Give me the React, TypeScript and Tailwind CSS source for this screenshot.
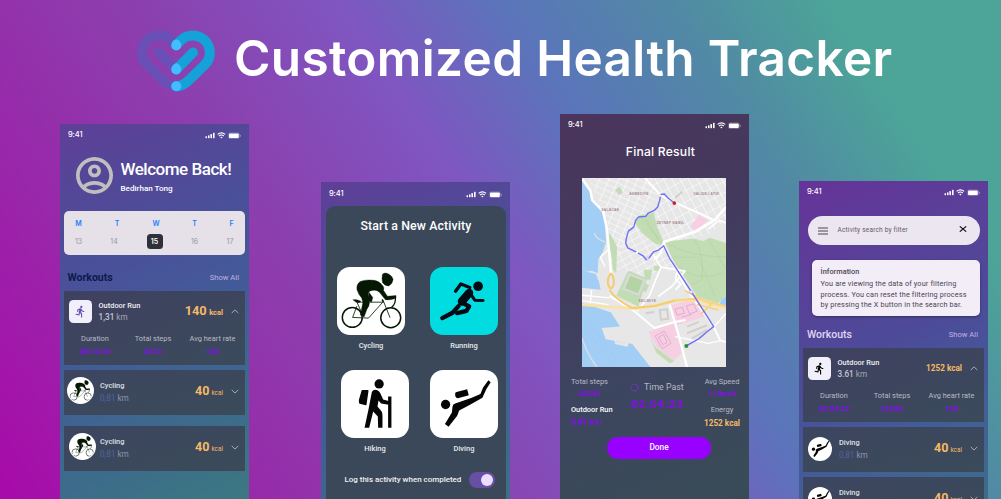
import React from "react";
import { MdDirectionsRun } from "react-icons/md";

function CyclistArt({ className }: { className?: string }) {
  return (
    <svg viewBox="0 0 205 205" className={className} fill="none" stroke="#041804">
      <circle cx="46" cy="152" r="30" strokeWidth="4.5" />
      <circle cx="162" cy="153" r="30" strokeWidth="4.5" />
      <path d="M60 106 L138 106 L95 154 L47 152 L60 118 M60 106 L80 150 M138 98 L160 153" strokeWidth="2.5" />
      <path d="M48 99 Q58 96 72 103 L66 108 Q56 108 48 99z" fill="#041804" />
      <path d="M136 98 L140 107 M164 122 Q178 112 176 90" strokeWidth="4" />
      <path d="M137 22 Q144 15 154 20 Q168 28 169 38 Q167 52 156 57 Q142 57 137 46 Q134 34 137 22z" fill="#041804" />
      <path
        d="M60 68 Q58 52 70 44 Q84 37 112 40 Q126 42 136 54 Q144 62 140 70 L152 88 L178 86 L178 94 Q164 100 146 99 L128 76 Q118 66 100 72 Q92 76 94 90 L98 108 Q98 118 90 128 L82 150 L70 145 Q74 128 78 106 Q76 92 66 82z"
        fill="#041804"
        strokeLinejoin="round"
      />
      <path d="M96 76 L108 92 L104 106 L92 100z" fill="#041804" />
    </svg>
  );
}

function RunnerArt({ className }: { className?: string }) {
  return (
    <svg
      viewBox="0 0 205 205"
      className={className}
      fill="none"
      stroke="#050a14"
      strokeLinecap="round"
      strokeLinejoin="round"
    >
      <circle cx="145" cy="58" r="14.5" fill="#050a14" stroke="none" />
      <path d="M77 73 L93 51 L120 62" strokeWidth="10" />
      <path d="M118 78 L96 104" strokeWidth="25" />
      <path d="M123 82 L135 100 L160 101" strokeWidth="9" />
      <path d="M98 108 L118 119 L110 132 L82 139" strokeWidth="13" />
      <path d="M86 118 L68 138 L37 154" strokeWidth="13" />
    </svg>
  );
}

function HikerArt({ className }: { className?: string }) {
  return (
    <svg viewBox="0 0 205 205" className={className} fill="#050505">
      <circle cx="115" cy="42" r="14" />
      <path d="M64 62 L81 62 L75 104 L57 100 Q55 98 56 90z" stroke="#050505" strokeWidth="4" strokeLinejoin="round" />
      <path d="M93 66 Q97 58 107 60 Q116 62 120 73 L127 89 L146 94 L144 105 L121 101 L113 92 L110 110 L122 124 Q126 130 125 138 L125 174 L112 174 L111 140 L97 125 L85 174 L71 174 L83 118z" />
      <path d="M142 80 H152 V174 H142z" />
    </svg>
  );
}

function DiverArt({ className }: { className?: string }) {
  return (
    <svg viewBox="0 0 205 205" className={className} fill="#050505">
      <circle cx="47" cy="104" r="14" />
      <path d="M76 70 Q76 67 80 66 L112 58 L117 76 L84 85 Q74 84 76 70z" />
      <path d="M45 163 L66 128 L68 110 Q69 103 76 101 L126 84 L152 72 L160 53 L176 31 L183 37 L170 57 L158 84 L122 104 L88 122 L82 138 L56 171z" />
    </svg>
  );
}

function Chevron({ up }: { up?: boolean }) {
  return (
    <svg viewBox="0 0 8 5" className="h-[5px] w-[8px]" fill="none" stroke="#b4b6c2" strokeWidth="0.9">
      <path d={up ? "M0.7 4 L4 0.9 L7.3 4" : "M0.7 0.9 L4 4 L7.3 0.9"} />
    </svg>
  );
}

function StatusBar() {
  return (
    <div className="flex h-[21px] shrink-0 items-center justify-between pt-[1px] pr-[8px] pl-[8px] text-white">
      <span className="font-['Inter'] text-[7.5px] leading-none font-medium tracking-[-0.1px]">9:41</span>
      <svg viewBox="0 0 36 7" className="h-[7px] w-[36px]" fill="white">
        <rect x="0.5" y="4.2" width="1.5" height="2" rx="0.4" />
        <rect x="3" y="3.3" width="1.5" height="2.9" rx="0.4" />
        <rect x="5.4" y="2.1" width="1.6" height="4.1" rx="0.4" />
        <rect x="8" y="0.8" width="1.6" height="5.4" rx="0.4" />
        <path d="M12.6 2.4 Q16.4 -0.8 20.2 2.4" fill="none" stroke="white" strokeWidth="1.2" />
        <path d="M14 4 Q16.4 2 18.8 4" fill="none" stroke="white" strokeWidth="1.2" />
        <path d="M15.2 5.2 Q16.4 4.2 17.6 5.2 L16.4 6.4z" />
        <rect x="23.4" y="0.9" width="11" height="5.6" rx="1.5" fill="none" stroke="white" strokeOpacity="0.45" strokeWidth="0.5" />
        <rect x="24" y="1.5" width="9.8" height="4.4" rx="0.9" />
        <rect x="35" y="2.8" width="0.7" height="2" rx="0.3" opacity="0.5" />
      </svg>
    </div>
  );
}

function Stat({ label, value }: { label: string; value: string }) {
  return (
    <div className="flex flex-col items-center whitespace-nowrap">
      <span className="h-[12.5px] text-[7.4px] leading-[12px] text-[#b9bac6]">{label}</span>
      <span className="h-[12px] text-[7.6px] leading-[12px] font-medium tracking-[0.1px] text-[#9200ff]">{value}</span>
    </div>
  );
}

function RunCard(props: {
  dark?: boolean;
  distance: string;
  energy: React.ReactNode;
  duration: string;
  steps: string;
}) {
  return (
    <div className="h-[74px] w-[181px] bg-linear-to-br from-[#3f4060] to-[#3a4b5b]">
      <div className="flex h-[40px] items-center pl-[5px]">
        <div className="flex size-[23px] items-center justify-center rounded-[4.5px] bg-[#f1eff9]">
          <MdDirectionsRun className={props.dark ? "size-[13px] text-black" : "size-[13px] text-[#6750b4]"} />
        </div>
        <div className="ml-[6.5px] flex flex-col whitespace-nowrap">
          <span className="h-[13px] text-[7.4px] leading-[13px] font-medium tracking-[0.02px] text-[#f0f0f5]">Outdoor Run</span>
          <span className="h-[11.5px] text-[8.2px] leading-[11.5px] text-[#a6a8b6]">
            <b className="font-medium text-[#c4c5cf]">{props.distance}</b> km
          </span>
        </div>
        <div className="ml-auto flex items-baseline whitespace-nowrap text-[#f7b964]">{props.energy}</div>
        <div className="flex w-[22px] justify-center pl-[1px]">
          <Chevron up />
        </div>
      </div>
      <div className="grid grid-cols-[62px_54px_65px] pt-[2px]">
        <Stat label="Duration" value={props.duration} />
        <Stat label="Total steps" value={props.steps} />
        <Stat label="Avg heart rate" value="120" />
      </div>
    </div>
  );
}

function SmallCard({ name, art, shift }: { name: string; art: React.ReactNode; shift: string }) {
  return (
    <div className="flex h-[45px] w-[181px] bg-linear-to-br from-[#3d4560] to-[#3a4b59]">
      <div className={`w-[36px] shrink-0 ${shift}`}>{art}</div>
      <div className="flex flex-col pt-[8.5px] whitespace-nowrap">
        <span className="h-[13px] text-[7.4px] leading-[13px] font-medium tracking-[0.02px] text-[#dfe0e8]">{name}</span>
        <span className="h-[12px] text-[8.2px] leading-[12px] text-[#9192ac]">
          <span className="text-[#53639f]">0,81</span> km
        </span>
      </div>
      <div className="ml-auto flex h-[43px] items-center">
        <div className="flex items-baseline text-[#f7b964]">
          <span className="text-[12.5px] leading-none font-bold">40</span>
          <span className="ml-[2px] text-[6.4px] leading-none">kcal</span>
        </div>
        <div className="flex w-[22px] justify-center pl-[1px]">
          <Chevron />
        </div>
      </div>
    </div>
  );
}

const days = ["M", "T", "W", "T", "F"];
const dates = ["13", "14", "15", "16", "17"];

function HomePhone() {
  return (
    <section className="mt-[10px] flex h-[409px] w-[189px] shrink-0 flex-col bg-[linear-gradient(155deg,#5e3f97_0%,#4a5099_32%,#435a98_48%,#3d6a8c_72%,#3b7980_95%)]">
      <StatusBar />
      <div className="flex h-[66px] shrink-0 pt-[12px] pl-[15.5px]">
        <svg viewBox="2 2 20 20" className="size-[37px]" fill="#bfbfc0">
          <path d="M12 2C6.48 2 2 6.48 2 12s4.48 10 10 10 10-4.48 10-10S17.52 2 12 2zM7.35 18.5C8.66 17.56 10.26 17 12 17s3.34.56 4.65 1.5C15.34 19.44 13.74 20 12 20s-3.34-.56-4.65-1.5zm10.79-1.38C16.45 15.8 14.32 15 12 15s-4.45.8-6.14 2.12C4.7 15.73 4 13.95 4 12c0-4.42 3.58-8 8-8s8 3.58 8 8c0 1.95-.7 3.73-1.86 5.12z" />
          <path d="M12 6c-1.93 0-3.5 1.57-3.5 3.5S10.07 13 12 13s3.5-1.57 3.5-3.5S13.93 6 12 6zm0 5c-.83 0-1.5-.67-1.5-1.5S11.17 8 12 8s1.5.67 1.5 1.5S12.83 11 12 11z" />
        </svg>
        <div className="ml-[8px] flex flex-col whitespace-nowrap text-white">
          <span className="h-[24px] text-[17px] leading-[25px] font-medium tracking-[-0.48px]">Welcome Back!</span>
          <span className="h-[14px] text-[8.1px] leading-[14px] font-medium">Bedirhan Tong</span>
        </div>
      </div>
      <div className="ml-[4px] h-[44px] w-[181px] shrink-0 rounded-[5px] bg-[#e6e0e9] font-['Inter'] text-[7px]">
        <div className="grid h-[22px] grid-cols-[29px_48px_30px_47px_27px] items-center pt-[2px] text-center leading-none font-semibold text-[#1f80fa]">
          {days.map((d, i) => (
            <span key={i}>{d}</span>
          ))}
        </div>
        <div className="grid h-[17px] grid-cols-[29px_42px_39px_41px_30px] items-center justify-items-center leading-none text-[#96969c]">
          {dates.map((d) =>
            d === "15" ? (
              <span key={d} className="flex h-[15px] w-[16px] items-center justify-center rounded-[3.5px] bg-[#2e3137] font-semibold text-white">
                {d}
              </span>
            ) : (
              <span key={d}>{d}</span>
            ),
          )}
        </div>
      </div>
      <div className="flex h-[36px] shrink-0 items-center justify-between pt-[10px] pr-[10px] pl-[7.5px] leading-none">
        <span className="text-[10.5px] font-bold text-[#0d1a4b]">Workouts</span>
        <span className="text-[7.6px] text-[#c0aee4]">Show All</span>
      </div>
      <div className="flex flex-col pl-[4px]">
        <RunCard
          distance="1,31"
          duration="00:12:34"
          steps="8372"
          energy={
            <>
              <span className="text-[12.8px] leading-none font-bold">140</span>
              <span className="ml-[2.5px] text-[7.5px] leading-none font-bold">kcal</span>
            </>
          }
        />
        <div className="mt-[5px]">
          <SmallCard
            name="Cycling"
            shift="pl-[3px] pt-[7px]"
            art={<CyclistArt className="size-[27px] rounded-full bg-white p-[1px]" />}
          />
        </div>
        <div className="mt-[11px]">
          <SmallCard
            name="Cycling"
            shift="pl-[4.5px] pt-[7px]"
            art={<CyclistArt className="size-[27px] rounded-full bg-white p-[1px]" />}
          />
        </div>
      </div>
    </section>
  );
}

function Tile({ label, tone, children }: { label: string; tone: string; children: React.ReactNode }) {
  return (
    <div className="flex w-[68px] flex-col items-center">
      <div className={`size-[68px] overflow-hidden rounded-[13px] ${tone}`}>{children}</div>
      <span className="mt-[5px] text-[7.5px] leading-[12px] font-medium text-[#e6e8ec]">{label}</span>
    </div>
  );
}

function ActivityPhone() {
  return (
    <section className="mt-[68px] ml-[72px] flex h-[409px] w-[189px] shrink-0 flex-col bg-[linear-gradient(155deg,#5e3f97_0%,#4a5099_32%,#435a98_48%,#3d6a8c_72%,#3b7980_95%)]">
      <div className="pt-[1px]">
        <StatusBar />
      </div>
      <div className="mt-[2px] ml-[5px] flex h-[400px] w-[180px] flex-col rounded-t-[9px] bg-[#3b4859]">
        <h2 className="mt-[10px] text-center text-[12.3px] leading-[20px] font-medium tracking-[0.13px] text-white">Start a New Activity</h2>
        <div className="mt-[31px] flex gap-[25px] pl-[11px]">
          <Tile label="Cycling" tone="bg-white">
            <CyclistArt />
          </Tile>
          <Tile label="Running" tone="bg-[#00dcdf]">
            <RunnerArt />
          </Tile>
        </div>
        <div className="mt-[18px] flex gap-[21px] pl-[15px]">
          <Tile label="Hiking" tone="bg-white">
            <HikerArt />
          </Tile>
          <Tile label="Diving" tone="bg-white">
            <DiverArt />
          </Tile>
        </div>
        <div className="mt-[17px] flex items-center pl-[18.5px]">
          <span className="w-[124.5px] text-[8px] leading-none font-medium tracking-[-0.02px] whitespace-nowrap text-[#f0f1f4]">
            Log this activity when completed
          </span>
          <div className="flex h-[16px] w-[26px] items-center justify-end rounded-full bg-[#6750a4] pr-[2px]">
            <div className="size-[12.5px] rounded-full bg-[#eaddff]" />
          </div>
        </div>
      </div>
    </section>
  );
}

function RouteMap() {
  return (
    <svg viewBox="21 25 432 566" preserveAspectRatio="none" className="h-[189px] w-[144px]" fill="none">
      <defs>
        <pattern id="blocksA" width="26" height="17" patternUnits="userSpaceOnUse" patternTransform="rotate(24)">
          <path d="M0 0 H26 M0 0 V17" stroke="#fff" strokeWidth="3.4" />
        </pattern>
        <pattern id="blocksB" width="22" height="30" patternUnits="userSpaceOnUse" patternTransform="rotate(-28)">
          <path d="M0 0 H22 M0 0 V30" stroke="#fff" strokeWidth="3.4" />
        </pattern>
        <pattern id="blocksC" width="19" height="27" patternUnits="userSpaceOnUse" patternTransform="rotate(62)">
          <path d="M0 0 H19 M0 0 V27" stroke="#fff" strokeWidth="3" />
        </pattern>
      </defs>
      <rect x="21" y="25" width="432" height="566" fill="#e7e7e7" />
      <path d="M40 25 H230 L250 75 L215 130 L160 180 L150 230 L105 300 L90 190 L85 120z" fill="url(#blocksA)" />
      <path d="M230 25 H453 V150 L400 195 L270 220 L235 150 L250 75z" fill="url(#blocksB)" />
      <path d="M150 190 L180 150 L260 220 L300 300 L240 310 L200 320 L130 300 L105 300z" fill="url(#blocksC)" />
      <g fill="#a2cef6">
        <path d="M21 32 L30 48 L44 66 L48 92 L66 108 L82 130 L90 160 L93 215 L84 245 L70 268 L68 310 L50 303 L34 306 L21 290z" />
        <path d="M21 290 L34 306 L62 312 L72 336 L77 360 L21 354z" />
        <path d="M21 400 L56 410 L108 428 L135 470 L80 474 L92 508 L172 522 L226 591 L21 591z" />
        <path d="M438 391 L453 378 V410 L434 404z" />
      </g>
      <g fill="#e7e7e7">
        <path d="M92 476 L140 478 L142 488 L96 486z" />
        <path d="M104 494 L150 498 L152 508 L108 505z" />
        <path d="M118 513 L160 520 L158 530 L120 522z" />
      </g>
      <path d="M21 505 Q40 560 66 591 M58 190 Q66 212 90 216" stroke="#d8dfe5" strokeWidth="4" />
      <path d="M30 440 L130 575 M30 470 L110 580" stroke="#98c5ec" strokeWidth="1" />
      <g fill="#c2ddb4">
        <path d="M178 156 L196 136 L214 134 L236 128 L246 170 L264 212 L262 226 L240 222 L200 188z" />
        <path d="M270 216 L356 206 L385 214 L405 204 L453 220 V376 L430 400 L368 382 L348 350 L318 306 L294 270z" />
        <path d="M93 186 L108 196 L126 230 L124 310 L114 300 L108 250z" />
        <path d="M160 302 L216 326 L190 410 L124 378z" />
        <path d="M120 60 L134 52 L144 68 L132 76z" />
        <path d="M206 300 L232 300 L226 330 L210 328z M236 288 L256 288 L254 304 L238 302z M204 338 L222 346 L212 368 L200 360z" />
        <path d="M222 496 L240 530 L298 574 L284 580 L244 548z" />
      </g>
      <path d="M164 316 L206 332 L190 372 L148 356z" stroke="#dadada" strokeWidth="9" />
      <path d="M166 318 L204 333 L189 370 L150 355z" fill="#b5d4a4" />
      <g stroke="#adcc9f" strokeWidth="1.4">
        <path d="M196 140 L262 222 M206 136 L250 210 M275 220 Q340 260 453 262 M360 210 Q390 260 380 330 L350 345 M290 262 L370 262 L420 380 M300 280 Q360 340 440 310 M400 208 L453 300" />
      </g>
      <g fill="#f7cfe3">
        <path d="M372 134 L398 152 L364 184 L346 172z" />
        <path d="M284 406 L364 386 L390 440 L306 466z" />
        <path d="M220 486 L298 458 L322 546 L296 572 L246 532z" />
      </g>
      <g stroke="#dba6c6" strokeWidth="2.4">
        <path d="M300 418 L322 412 L328 430 L306 436z M334 408 L356 402 L366 424 L344 432z M318 442 L350 434 M240 498 L268 484 L288 520 L262 536z M250 502 L266 494 L276 518 L264 524z" />
      </g>
      <g stroke="#d2d0cc" strokeWidth="6">
        <path d="M254 420 L276 418 L280 446 L258 450z M322 66 L300 84 M130 64 L140 72 M336 490 L396 466 M350 506 L396 480 M336 470 L372 456 M212 430 L238 426" />
      </g>
      <g stroke="#fff" strokeLinejoin="round">
        <path d="M22 28 L46 62 L52 92 L84 124 L96 180 L102 240 L108 310" strokeWidth="7" />
        <path d="M210 25 L256 76 L298 98 L372 130 L418 152" strokeWidth="6" />
        <path d="M453 112 L418 152 L360 186 L268 216 L256 250 L240 270" strokeWidth="8" />
        <path d="M453 160 L432 152 L400 178" strokeWidth="5" />
        <path d="M264 222 L296 288 L340 366 L416 470 L436 512 L453 516" strokeWidth="6" />
        <path d="M104 378 L178 424 L238 474 L300 456 L332 450" strokeWidth="6" />
        <path d="M284 404 L312 500 L336 591" strokeWidth="7" />
        <path d="M186 424 L222 380 L258 292 L232 250 M258 292 L330 304 L290 350 L250 380 M306 300 L302 330 L318 342 L302 360" strokeWidth="5" />
        <path d="M100 240 L76 262 L90 290 M418 470 L453 430 M300 500 L400 520 L436 512 M21 376 L104 384 M21 392 L100 404 M50 360 L46 400" strokeWidth="4" />
      </g>
      <path d="M21 404 L110 412 L184 416 L250 404 L310 390 L370 392 L453 416" stroke="#fbe2a4" strokeWidth="8" />
      <path d="M108 310 Q122 330 114 350 Q106 362 100 346 Q94 328 108 310 M104 360 Q118 386 170 414 L240 408 L300 392" stroke="#f6cb6c" strokeWidth="6" />
      <path d="M330 362 L386 392 L453 410 M300 392 L372 386 L410 402 L378 432 M366 404 L430 420" stroke="#f8d480" strokeWidth="6" />
      <path
        d="M298 100 L278 84 L268 73 L257 74 L254 92 L248 112 L238 122 L220 130 L212 140 L190 142 L182 152 L176 172 L160 184 L154 206 L152 220 L158 234 L186 248 L204 258 L214 270 L222 264 L236 246 L252 240 L266 228 L284 266 L348 364 L416 470 L398 484 L372 506 L334 528"
        stroke="#7070f6"
        strokeWidth="4.2"
        strokeLinejoin="round"
      />
      <circle cx="255" cy="78" r="4" fill="#fff" stroke="#aaa" />
      <circle cx="186" cy="248" r="3.5" fill="#fff" />
      <circle cx="218" cy="266" r="4" fill="#eef" stroke="#7474f4" />
      <circle cx="349" cy="366" r="5" fill="#eef" stroke="#7474f4" />
      <circle cx="298" cy="100" r="5.5" fill="#cf1f2c" />
      <circle cx="334" cy="528" r="6" fill="#2d8f3a" />
      <g fill="#a5898c" fontFamily="Liberation Sans, sans-serif" fontSize="10" fontWeight="bold" letterSpacing="0.8" textAnchor="middle">
        <text x="192" y="77">AHMEDİYE</text>
        <text x="394" y="77">VALİDE-İ ATİK</text>
        <text x="106" y="124">SALACAK</text>
        <text x="286" y="162">ZEYNEP KAMİL</text>
        <text x="217" y="395">SELİMİYE</text>
      </g>
    </svg>
  );
}

function ResultPhone() {
  return (
    <section className="ml-[50px] flex h-[409px] w-[189px] shrink-0 flex-col bg-[linear-gradient(160deg,#4b355c_0%,#433a5e_32%,#3d4560_60%,#3a4a59_85%,#394b57_100%)]">
      <StatusBar />
      <h2 className="mt-[7px] ml-[12px] h-[20px] text-center font-['Inter'] text-[12.2px] leading-[20px] font-medium tracking-[0.2px] text-white">Final Result</h2>
      <div className="mt-[16px] ml-[22px] h-[189px]">
        <RouteMap />
      </div>
      <div className="mt-[7.5px] flex h-[58px] justify-between pr-[8px] pl-[11px] text-[7.5px] whitespace-nowrap">
        <div className="flex w-[42px] flex-col">
          <span className="h-[12.5px] leading-[13px] text-[#b9bac6]">Total steps</span>
          <span className="h-[16.5px] w-[36px] text-center leading-[13px] font-medium text-[#9200ff]">22353</span>
          <span className="h-[12px] text-[7.4px] leading-[12px] font-medium text-white">Outdoor Run</span>
          <span className="text-[8.2px] leading-[13px] text-[#9200ff]">
            <b className="font-medium">3.61</b> km
          </span>
        </div>
        <div className="flex w-[56px] flex-col pt-[5.5px]">
          <div className="flex h-[14px] items-center">
            <svg viewBox="0 0 10 10" className="size-[9px]" fill="none" strokeWidth="1.1">
              <circle cx="5" cy="5" r="4" stroke="#5c3f88" />
              <path d="M5 1 A4 4 0 1 1 1.5 7" stroke="#7a2fc4" />
            </svg>
            <span className="ml-[5px] text-[8.8px] leading-none text-[#b9bac6]">Time Past</span>
          </div>
          <span className="mt-[2.5px] ml-[1px] font-['Inter'] text-[9.8px] leading-[16px] font-semibold tracking-[1.1px] text-[#9200ff]">02:54:23</span>
        </div>
        <div className="flex w-[38px] flex-col items-center">
          <span className="h-[12px] text-[7.4px] leading-[14px] text-[#b9bac6]">Avg Speed</span>
          <span className="h-[16.5px] leading-[14px] font-medium text-[#9200ff]">11 km/h</span>
          <span className="h-[12.5px] leading-[13px] text-[#b9bac6]">Energy</span>
          <span className="text-[8.2px] leading-[14px] font-bold text-[#f7b964]">1252 kcal</span>
        </div>
      </div>
      <button className="mt-[4px] ml-[47px] h-[22px] w-[104px] shrink-0 rounded-full bg-[#9800ff] text-[8.3px] leading-none font-medium text-white">Done</button>
    </section>
  );
}

function FilterPhone() {
  return (
    <section className="mt-[67px] ml-[50px] flex h-[409px] w-[189px] shrink-0 flex-col bg-[linear-gradient(155deg,#663399_0%,#5a3f98_20%,#4c4c99_42%,#435c98_60%,#3d6f8a_85%)]">
      <StatusBar />
      <div className="mt-[14px] ml-[9px] flex h-[29px] w-[172px] shrink-0 items-center rounded-full bg-[#ece6f0] pr-[13px] pl-[10px]">
        <svg viewBox="0 0 10 8" className="h-[8px] w-[10px]" stroke="#49454f" strokeWidth="1">
          <path d="M0 1 H10 M0 4 H10 M0 7 H10" />
        </svg>
        <span className="ml-[9.5px] text-[6.5px] leading-none tracking-[0.2px] whitespace-nowrap text-[#5f5b66]">Activity search by filter</span>
        <svg viewBox="0 0 8 6" className="mb-[3px] ml-auto h-[6px] w-[8px]" stroke="#111" strokeWidth="1.2">
          <path d="M0.8 0.4 L7.2 5.6 M7.2 0.4 L0.8 5.6" />
        </svg>
      </div>
      <div className="mt-[15px] ml-[13px] h-[56px] w-[168px] shrink-0 rounded-[5px] bg-[#f3edf7] pt-[6px] pl-[8.5px] whitespace-nowrap text-[#4a4653] shadow-[0_1px_3px_rgba(0,0,0,0.35)]">
        <div className="text-[7.3px] leading-[12px] font-medium tracking-[0.06px]">İnformation</div>
        <p className="mt-[1px] text-[7.3px] leading-[10.6px] tracking-[0.14px]">
          You are viewing the data of your filtering
          <br />
          process. You can reset the filtering process
          <br />
          by pressing the X button in the search bar.
        </p>
      </div>
      <div className="flex h-[32px] shrink-0 items-center justify-between pt-[6px] pr-[10px] pl-[8px] leading-none">
        <span className="text-[10.5px] font-medium text-[#e0d6f4]">Workouts</span>
        <span className="text-[7.6px] text-[#c0aee4]">Show All</span>
      </div>
      <div className="flex flex-col gap-[5px] pl-[4px]">
        <RunCard
          dark
          distance="3.61"
          duration="02:54:23"
          steps="22353"
          energy={<span className="text-[8.2px] leading-none font-bold">1252 kcal</span>}
        />
        <SmallCard name="Diving" shift="pl-[5px] pt-[10px]" art={<DiverArt className="size-[24px] rounded-full bg-white" />} />
        <SmallCard name="Diving" shift="pl-[5px] pt-[10px]" art={<DiverArt className="size-[24px] rounded-full bg-white" />} />
      </div>
    </section>
  );
}

function HeartLogo() {
  return (
    <svg viewBox="0 0 78 62" className="h-[62px] w-[78px]" fill="none" strokeLinecap="round" strokeWidth="10">
      <g stroke="#6a50b6">
        <path d="M39.3 15 L34.3 10.5 A17.1 17.1 0 0 0 10.2 34.8 L27 51 Q33 56.3 39 56.3" />
        <path d="M22 22.5 L39.3 39.5" />
      </g>
      <g stroke="#14a2d8">
        <path d="M39.3 15 L43.7 10.5 A17.1 17.1 0 0 1 67.8 34.8 L51 51 Q45 56.3 39.3 56.3" />
        <path d="M56 22.5 L39.3 39.5" />
      </g>
      <g fill="#42bdff" stroke="none">
        <path d="M39.3 9.2 Q44.3 11 44.3 15.5 A5 5 0 0 1 34.3 15.500 Q34.3 11 39.3 9.2z" />
        <path d="M39.3 33 Q44.3 35 44.3 39.5 A5 5 0 0 1 34.3 39.5 Q34.3 35 39.3 33z" />
        <circle cx="39.3" cy="56.3" r="5" />
      </g>
    </svg>
  );
}

export default function App() {
  return (
    <main className="h-[499px] w-[1001px] overflow-hidden bg-[linear-gradient(57deg,#a80aa9_0%,#9430aa_23%,#8a42b0_36%,#7f56c0_50%,#5b74bb_62%,#5189a4_75%,#4ca598_87%,#4ca598_100%)] font-['Roboto',sans-serif]">
      <header className="flex h-[114px] pt-[30px] pl-[137px]">
        <HeartLogo />
        <h1 className="ml-[19px] font-['Inter',sans-serif] text-[49.5px] leading-[56px] font-semibold tracking-[0.35px] whitespace-nowrap text-white">
          Customized Health Tracker
        </h1>
      </header>
      <div className="flex h-[385px] items-start pl-[60px]">
        <HomePhone />
        <ActivityPhone />
        <ResultPhone />
        <FilterPhone />
      </div>
    </main>
  );
}
